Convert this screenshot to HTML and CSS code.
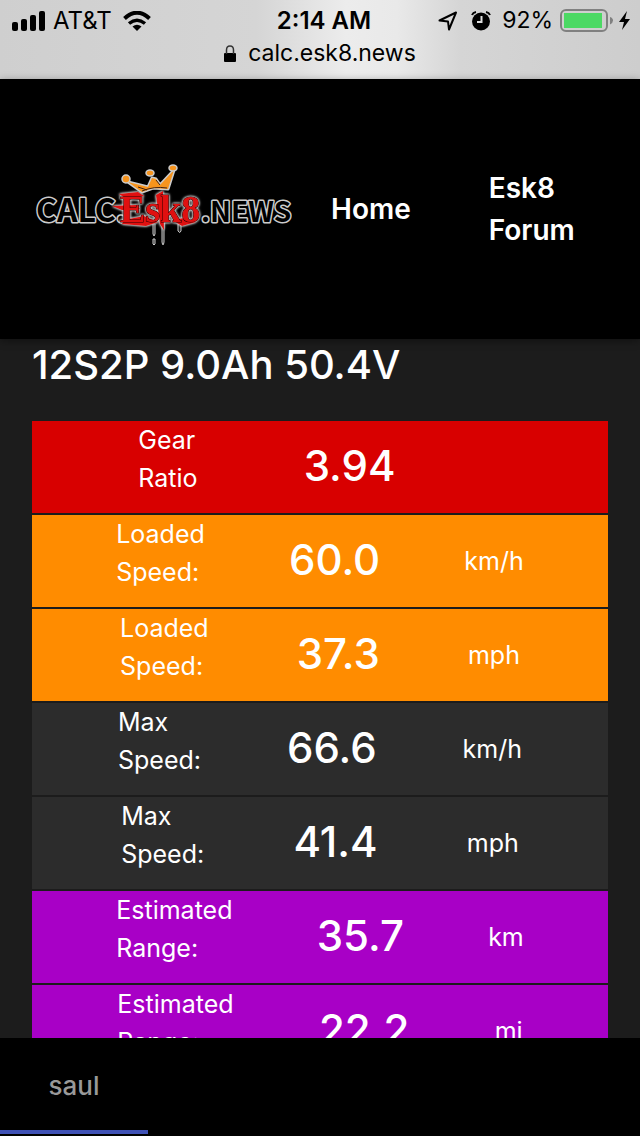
FILE: index.html
```html
<!DOCTYPE html>
<html lang="en">
<head>
    <meta charset="utf-8">
    <meta name="viewport" content="width=device-width, initial-scale=1">
    <title>calc.esk8.news</title>
    <link rel="stylesheet" href="styles.css">
</head>
<body>

<div class="browser-bar">
    <div class="status">
        <div class="status-left">
            <svg width="34" height="20" viewBox="0 0 34 20">
                <rect x="0" y="11" width="6" height="9" rx="2"/>
                <rect x="9" y="8" width="6" height="12" rx="2"/>
                <rect x="18" y="4" width="6" height="16" rx="2"/>
                <rect x="27" y="0" width="6" height="20" rx="2"/>
            </svg>
            <span class="carrier">AT&amp;T</span>
            <svg width="28" height="20" viewBox="0 0 28 20">
                <path d="M1.500 7.500Q14-4 26.500 7.500" fill="none" stroke="#000" stroke-width="4"/>
                <path d="M6 12.500Q14 6 22 12.500" fill="none" stroke="#000" stroke-width="3.500"/>
                <path d="M9.500 15.500Q14 12 18.500 15.500L14 20z"/>
            </svg>
        </div>
        <div class="clock">2:14 AM</div>
        <div class="status-right">
            <svg width="20" height="20" viewBox="0 0 20 20">
                <path d="M1.500 9.500L18 1.500L11 18.500L10 10.500z" fill="none" stroke="#000" stroke-width="2" stroke-linejoin="round"/>
            </svg>
            <svg class="alarm" width="20" height="20" viewBox="0 0 20 20">
                <circle cx="10" cy="10.500" r="9"/>
                <path d="M1 4Q2 1.500 5 1M15 1Q18 1.500 19 4" fill="none" stroke="#000" stroke-width="2"/>
                <path d="M10.500 5V11H6" fill="none" stroke="#ddd" stroke-width="2"/>
            </svg>
            <span class="percent">92%</span>
            <svg width="76" height="24" viewBox="0 0 76 24">
                <rect x="1" y="1" width="46" height="21" rx="5" fill="none" stroke="#808080" stroke-width="2"/>
                <rect x="4" y="4" width="38" height="15" fill="#4cd964"/>
                <path d="M50 8Q53 9 53 11.500T50 15.500z" fill="#808080"/>
                <path d="M67 2L59 13H64L62 21L70 10H65z"/>
            </svg>
        </div>
    </div>
    <div class="address">
        <svg width="12" height="18" viewBox="0 0 12 18">
            <rect x="0" y="8" width="12" height="9" rx="1"/>
            <path d="M2.500 9V5Q2.500 1 6 1T9.500 5V9" fill="none" stroke="#333" stroke-width="1.500"/>
        </svg>
        <span>calc.esk8.news</span>
    </div>
</div>

<header class="site-header">
    <svg class="logo" width="260" height="90" viewBox="0 0 260 90">
        <text class="logo-calc" x="4" y="62">CALC.</text>
        <text class="logo-news" x="169" y="62">.NEWS</text>
        <!-- spikes and drips -->
        <path d="M121 64V74L122 76L123 74V64M121 79H123V84L122 85L121 84zM130 62V82Q131 88 132 82V62M146 64V71Q148 74 149 71V64" fill="#222" stroke="#ccc" stroke-width="1"/>
        <g class="logo-graffiti">
            <path d="M80 46L104 45L108 49L90 50z"/>
            <path d="M87 34L106 32L112 36L96 40z"/>
            <path d="M92 60L112 56L126 62L114 66L90 64z"/>
            <path d="M124 35L131 31L132 70L128 64z"/>
            <path d="M140 60L152 58L164 62L150 66z"/>
            <text class="logo-esk8" x="88" y="62">Esk8</text>
        </g>
        <!-- crown -->
        <g stroke="#ccc" stroke-linejoin="round">
            <path d="M96 22L116 27L120 18L124 19L128 25L142 10L136 29L121 28L110 32z" fill="#f7941d" stroke-width="3" paint-order="stroke"/>
            <g fill="#f7941d" stroke-width="1.500">
                <circle cx="94" cy="19" r="4"/>
                <ellipse cx="118" cy="13" rx="4" ry="3"/>
                <ellipse cx="141" cy="8" rx="4" ry="3"/>
            </g>
        </g>
        <path d="M110 31Q122 26 135 28M106 27L115 30M124 20L128 25" fill="none" stroke="#421" stroke-width="1"/>
    </svg>
    <nav class="nav">
        <a href="#">Home</a>
        <a href="#">Esk8 Forum</a>
    </nav>
</header>

<main class="content">
    <h1>12S2P 9.0Ah 50.4V</h1>
    <div class="row red">
        <div class="label">Gear Ratio</div>
        <div class="value">3.94</div>
        <div class="unit"></div>
    </div>
    <div class="row orange">
        <div class="label">Loaded Speed:</div>
        <div class="value">60.0</div>
        <div class="unit">km/h</div>
    </div>
    <div class="row orange">
        <div class="label">Loaded Speed:</div>
        <div class="value">37.3</div>
        <div class="unit">mph</div>
    </div>
    <div class="row grey">
        <div class="label">Max Speed:</div>
        <div class="value">66.6</div>
        <div class="unit">km/h</div>
    </div>
    <div class="row grey">
        <div class="label">Max Speed:</div>
        <div class="value">41.4</div>
        <div class="unit">mph</div>
    </div>
    <div class="row purple">
        <div class="label">Estimated Range:</div>
        <div class="value">35.7</div>
        <div class="unit">km</div>
    </div>
    <div class="row purple">
        <div class="label">Estimated Range:</div>
        <div class="value">22.2</div>
        <div class="unit">mi</div>
    </div>
</main>

<footer class="tabs">
    <button class="tab">saul</button>
</footer>

</body>
</html>
```
FILE: styles.css
```css
* {
    box-sizing: border-box;
}
body {
    margin: 0;
    height: 100vh;
    display: flex;
    flex-direction: column;
    overflow: hidden;
    background-color: #1c1c1c;
    color: #fff;
    font-family: Inter, "Liberation Sans", sans-serif;
    font-size: 25px;
}
.browser-bar {
    flex: none;
    height: 79px;
    padding-top: 4px;
    color: #000;
    font-size: 24px;
    line-height: 33px;
    background: linear-gradient(90deg, #cfcfcf, #d5d5d5 40%, #ececec 54%, #e9e9e9 62%, #d5d5d5 72%, #cdcdcd);
}
.status {
    display: grid;
    grid-template-columns: 1fr auto 1fr;
    align-items: center;
    padding: 0 4px 0 12px;
}
.status-left, .status-right {
    display: flex;
    align-items: center;
    gap: 7px;
}
.status-left .carrier {
    margin-right: 4px;
}
.status-right {
    justify-content: flex-end;
}
.alarm {
    margin: 0 4px 0 6px;
}
.clock {
    font-weight: 600;
}
.percent, .address {
    font-size: 23px;
}
.address {
    display: flex;
    justify-content: center;
    align-items: center;
    gap: 12px;
}
.site-header {
    flex: none;
    display: flex;
    align-items: center;
    height: 260px;
    padding: 0 32px;
    background-color: #000;
    box-shadow: 0 2px 8px rgba(0, 0, 0, 0.4);
}
.logo {
    flex: none;
    margin-top: -8px;
}
.logo-calc, .logo-news {
    fill: #000;
    stroke: #ccc;
    stroke-width: 3px;
    stroke-linejoin: round;
    paint-order: stroke;
    font-family: "Noto Sans CJK JP", sans-serif;
    font-weight: bold;
}
.logo-calc {
    font-size: 32px;
}
.logo-news {
    font-size: 28px;
}
.logo-graffiti {
    fill: #e01010;
    filter: drop-shadow(0 0 1px #ddd) drop-shadow(0 0 1px #ddd);
}
.logo-esk8 {
    font: bold 38px "Liberation Serif", serif;
    stroke: #200;
    stroke-width: 1px;
    paint-order: stroke;
}
.nav {
    flex: 1;
    display: flex;
    align-items: center;
    gap: 78px;
    padding-left: 39px;
}
.nav a {
    color: #fff;
    font-size: 28px;
    font-weight: 600;
    line-height: 42px;
    text-decoration: none;
}
.content {
    flex: 1;
    min-height: 0;
    overflow: hidden;
    padding: 0 32px;
}
h1 {
    margin: 0 0 30px;
    font-size: 40px;
    font-weight: 500;
    line-height: 52px;
}
.row {
    display: flex;
    justify-content: space-evenly;
    align-items: center;
    height: 92px;
    margin-bottom: 2px;
}
.label {
    width: min-content;
    margin-bottom: 16px;
    line-height: 38px;
}
.value {
    padding-bottom: 4px;
    font-size: 42px;
    font-weight: 500;
}
.red {
    background-color: #d80000;
}
.orange {
    background-color: #ff8c00;
}
.grey {
    background-color: #2c2c2c;
}
.purple {
    background-color: #a800c6;
}
.tabs {
    flex: none;
    height: 98px;
    padding-bottom: 2px;
    background-color: #000;
}
.tab {
    height: 100%;
    width: 148px;
    padding: 2px 0 0;
    border: none;
    border-bottom: 4px solid #3f51b5;
    background: none;
    color: #999;
    font-family: inherit;
    font-size: 26px;
    font-weight: 500;
}
```
